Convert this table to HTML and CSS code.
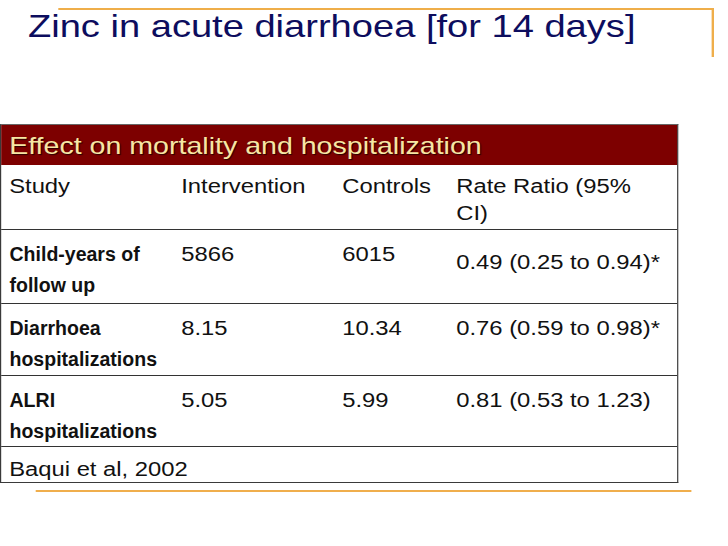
FILE: index.html
```html
<!DOCTYPE html>
<html lang="en">
<head>
<meta charset="utf-8">
<title>Zinc in acute diarrhoea</title>
<link rel="stylesheet" href="styles.css">
</head>
<body>
<div class="slide">
  <div class="title-frame">
    <h1 class="title">Zinc in acute diarrhoea [for 14 days]</h1>
  </div>
  <div class="tbl">
    <div class="caption">Effect on mortality and hospitalization</div>
    <div class="row head">
      <div class="cell">Study</div>
      <div class="cell">Intervention</div>
      <div class="cell">Controls</div>
      <div class="cell rr">Rate Ratio (95% CI)</div>
    </div>
    <div class="row r1">
      <div class="cell label"><span class="narrow">Child-years of follow up</span></div>
      <div class="cell">5866</div>
      <div class="cell">6015</div>
      <div class="cell rr low">0.49 (0.25 to 0.94)*</div>
    </div>
    <div class="row r2">
      <div class="cell label"><span class="narrow">Diarrhoea hospitalizations</span></div>
      <div class="cell">8.15</div>
      <div class="cell">10.34</div>
      <div class="cell rr">0.76 (0.59 to 0.98)*</div>
    </div>
    <div class="row r3">
      <div class="cell label"><span class="narrow">ALRI hospitalizations</span></div>
      <div class="cell">5.05</div>
      <div class="cell">5.99</div>
      <div class="cell rr">0.81 (0.53 to 1.23)</div>
    </div>
    <div class="foot">Baqui et al, 2002</div>
  </div>
  <div class="rule"></div>
</div>
</body>
</html>
```
FILE: styles.css
```css
html, body {
  margin: 0;
  padding: 0;
  background: #ffffff;
}

body {
  width: 728px;
  height: 546px;
  overflow: hidden;
  font-family: "Liberation Sans", Arial, sans-serif;
  color: #111111;
}

.slide {
  width: 612px;
  padding-top: 8px;
  transform: scaleX(1.19);
  transform-origin: 0 0;
}

.title-frame {
  margin-left: 48.7px;
  width: 549px;
  height: 47px;
  border-top: 2px solid #efae4a;
  border-right: 2px solid #efae4a;
}

.title {
  margin: 0 0 0 -25.2px;
  font-weight: normal;
  font-size: 32px;
  line-height: 32px;
  color: #0d0d5e;
  white-space: nowrap;
}

.tbl {
  margin-top: 67px;
  width: 568px;
  border: 1px solid #3a3a3a;
  border-top-color: #666666;
}

.caption {
  height: 40px;
  box-sizing: border-box;
  padding: 2px 0 0 6.7px;
  background: #7d0000;
  color: #f7e6a4;
  font-size: 24px;
  line-height: 38px;
  text-shadow: 1px 1px 1px #2a0000;
  white-space: nowrap;
}

.row {
  display: grid;
  grid-template-columns: 144.6px 135.3px 95.8px 1fr;
  box-sizing: border-box;
  border-bottom: 1px solid #333333;
  font-size: 20px;
  line-height: 31px;
}

.cell {
  padding: 9px 4px 0 6.7px;
}

.cell.rr {
  padding-right: 10px;
}

.head {
  height: 65px;
  line-height: 27px;
}

.head .cell {
  padding-top: 8px;
}

.r1 { height: 74px; }
.r2 { height: 72px; }
.r3 { height: 71px; }

.label {
  font-weight: bold;
  padding-right: 0;
  overflow: visible;
}

.narrow {
  display: inline-block;
  width: 160px;
  transform: scaleX(0.82);
  transform-origin: 0 0;
}

.cell.low {
  padding-top: 17px;
}

.foot {
  height: 35px;
  box-sizing: border-box;
  padding: 9px 0 0 6.7px;
  font-size: 20px;
  line-height: 27px;
}

.rule {
  margin: 7px 0 0 30.3px;
  width: 551px;
  height: 2px;
  background: #f0ae4c;
}
```
